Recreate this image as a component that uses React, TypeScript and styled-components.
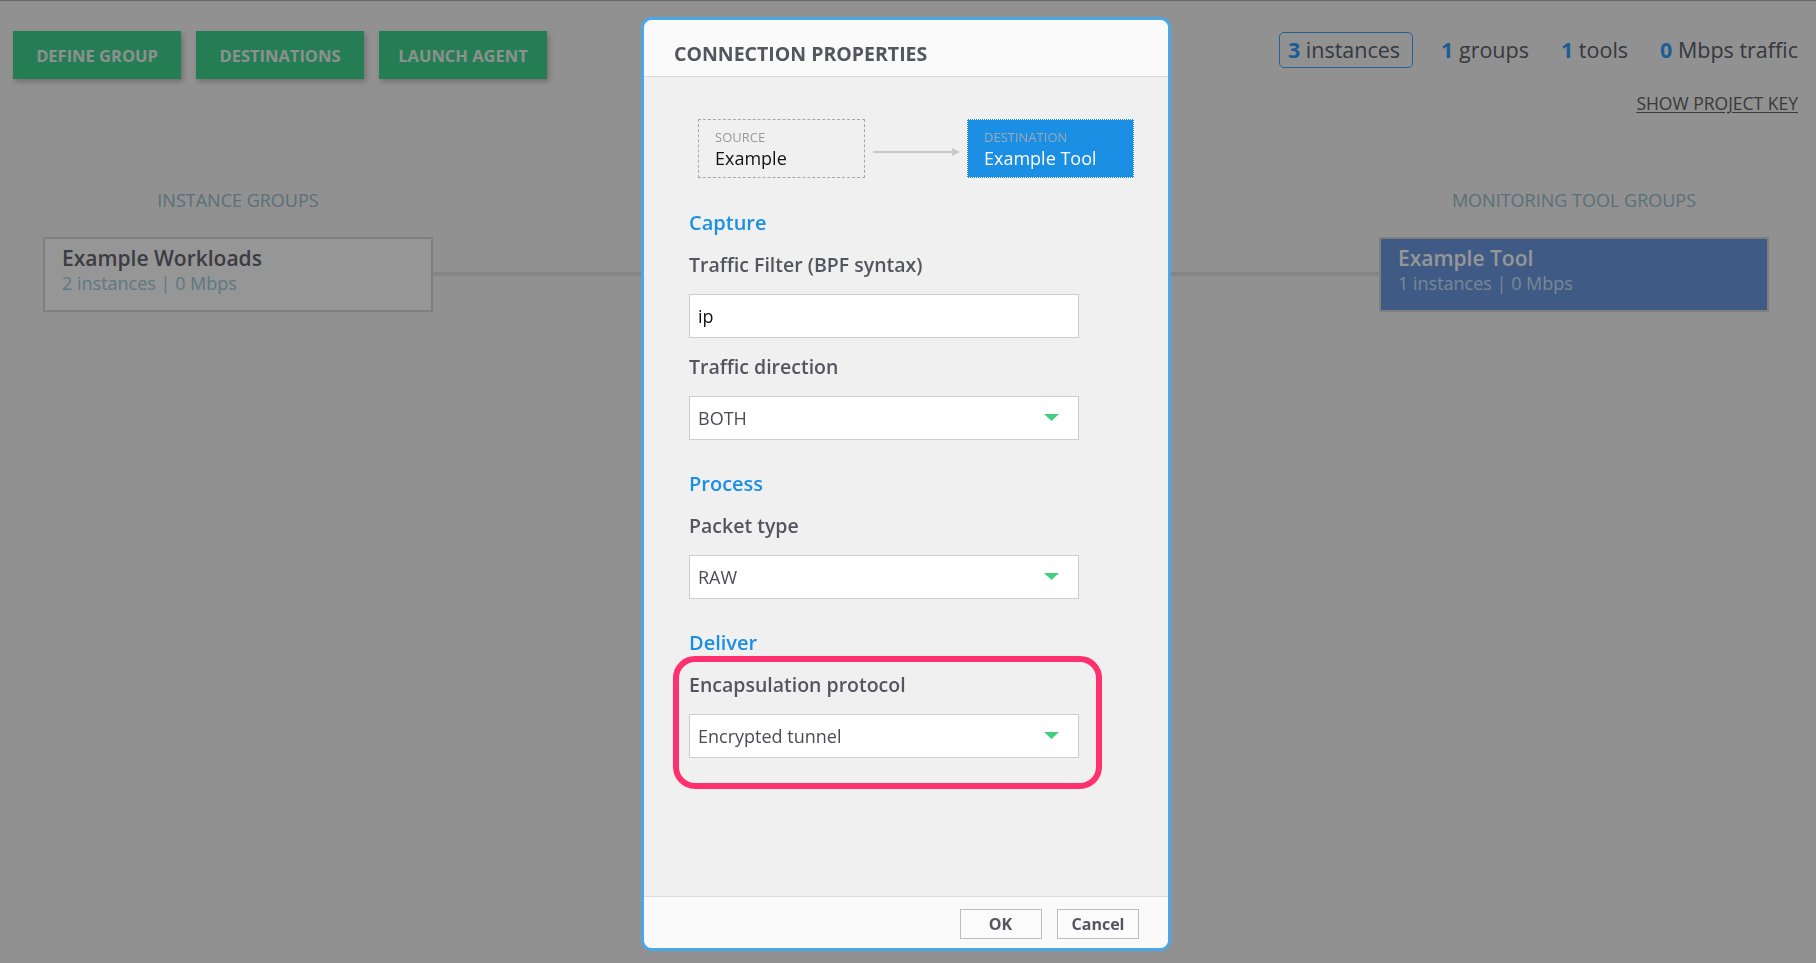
import React from "react";
import styled, { createGlobalStyle } from "styled-components";

const GlobalStyle = createGlobalStyle`
  html, body {
    margin: 0;
    padding: 0;
  }
  body {
    font-family: "Open Sans", "Noto Sans", "Liberation Sans", sans-serif;
    background: #f6f6f6;
    overflow: hidden;
  }
  * { box-sizing: border-box; }
`;

const Page = styled.div`
  min-height: 963px;
  border-top: 1px solid #b4b4b4;
  padding-top: 30px;
`;

const TopBar = styled.header`
  display: flex;
  justify-content: space-between;
  align-items: flex-start;
  padding: 0 9px 0 13px;
`;

const ActionButtons = styled.div`
  display: flex;
  gap: 15px;
`;

const ActionButton = styled.button`
  width: 168px;
  height: 48px;
  border: none;
  background: #40d68d;
  color: #eef5f1;
  font-family: inherit;
  font-weight: 700;
  font-size: 16.5px;
  text-transform: uppercase;
  box-shadow: 2px 3px 5px rgba(0, 0, 0, 0.22);
  cursor: pointer;
`;

const Summary = styled.div`
  display: flex;
  flex-direction: column;
  align-items: flex-end;
  margin-top: 1px;
`;

const Stats = styled.div`
  display: flex;
  gap: 14px;
`;

const Stat = styled.div<{ $active?: boolean }>`
  height: 36px;
  padding: ${(p) => (p.$active ? "0 12px 0 8px" : "0 8px")};
  margin-right: ${(p) => (p.$active ? "5px" : "0")};
  border: 1px solid ${(p) => (p.$active ? "#3aa5fb" : "transparent")};
  border-radius: 5px;
  font-size: 21.5px;
  line-height: 34px;
  color: #5c616b;
  white-space: nowrap;
`;

const StatValue = styled.span`
  color: #31a1fc;
  font-weight: 700;
`;

const KeyLink = styled.a`
  margin-top: 23px;
  margin-right: 9px;
  font-size: 17.5px;
  line-height: 24px;
  color: #636363;
  text-decoration: underline;
  text-underline-offset: 2px;
  text-transform: uppercase;
  cursor: pointer;
`;

const Board = styled.section`
  display: grid;
  grid-template-columns: 390px 1fr 390px;
  row-gap: 24.7px;
  margin-top: 74px;
  padding: 0 47px 0 43px;
`;

const ColumnTitle = styled.div<{ $col: number }>`
  grid-column: ${(p) => p.$col};
  text-align: center;
  font-size: 18px;
  line-height: 23px;
  color: #99bfd0;
  text-transform: uppercase;
`;

const GroupCard = styled.div<{ $tool?: boolean }>`
  height: 75px;
  padding: 6px 17px 0;
  border: 2px solid #d9d9d9;
  background: ${(p) => (p.$tool ? "#6b99e1" : "#ffffff")};
`;

const CardTitle = styled.div<{ $tool?: boolean }>`
  font-size: 21px;
  font-weight: 600;
  line-height: 27px;
  color: ${(p) => (p.$tool ? "#ffffff" : "#666673")};
`;

const CardMeta = styled.div<{ $tool?: boolean }>`
  font-size: 18px;
  line-height: 23px;
  color: ${(p) => (p.$tool ? "#cce6ff" : "#a3cae0")};
`;

const Connector = styled.div`
  height: 4px;
  align-self: center;
  background: #e3e3e3;
`;

const Overlay = styled.div`
  position: fixed;
  inset: 0;
  background: rgba(0, 0, 0, 0.41);
  display: flex;
  justify-content: center;
  align-items: flex-start;
  padding: 17px 4px 0 0;
`;

const Modal = styled.div`
  width: 530px;
  height: 934px;
  border: 3px solid #4aa8e8;
  border-radius: 11px;
  background: #f0f0f0;
  display: flex;
  flex-direction: column;
  overflow: hidden;
`;

const ModalHeader = styled.div`
  height: 57px;
  padding: 19.7px 30px 0;
  background: #fafafa;
  border-bottom: 1px solid #dcdcdc;
`;

const ModalTitle = styled.h2`
  margin: 0;
  font-size: 19.5px;
  line-height: 27px;
  font-weight: 700;
  color: #55555f;
  text-transform: uppercase;
`;

const ModalBody = styled.div`
  flex: 1;
  padding: 42px 0 0 45px;
`;

const FlowRow = styled.div`
  display: flex;
  align-items: flex-start;
  margin-left: 9px;
`;

const FlowNode = styled.div<{ $dest?: boolean }>`
  width: 167px;
  height: 59px;
  padding: 8px 16px;
  border: 1px ${(p) => (p.$dest ? "dotted #ffffff" : "dashed #a8a8a8")};
  background: ${(p) => (p.$dest ? "#1a8fe3" : "transparent")};
`;

const NodeLabel = styled.div<{ $dest?: boolean }>`
  font-size: 13px;
  line-height: 18px;
  color: ${(p) => (p.$dest ? "#9ca8b4" : "#9a9a9a")};
  text-transform: uppercase;
`;

const NodeName = styled.div<{ $dest?: boolean }>`
  font-size: 18px;
  line-height: 24px;
  color: ${(p) => (p.$dest ? "#ffffff" : "#111111")};
`;

const FlowArrow = styled.svg`
  display: block;
  margin: 28px 7px 0 8px;
`;

const Section = styled.section`
  margin-top: 30px;
  &:first-of-type {
    margin-top: 30.5px;
  }
`;

const SectionTitle = styled.h3`
  margin: 0 0 15px;
  font-size: 20px;
  line-height: 27px;
  font-weight: 600;
  color: #1a8fe3;
`;

const Field = styled.div`
  position: relative;
  width: 390px;
  & + & {
    margin-top: 15px;
  }
`;

const FieldLabel = styled.label`
  display: block;
  margin-bottom: 16px;
  font-size: 19.5px;
  line-height: 27px;
  font-weight: 600;
  color: #55555f;
`;

const TextInput = styled.input`
  display: block;
  width: 390px;
  height: 44px;
  padding: 0 8px;
  border: 1px solid #cdcdcd;
  background: #ffffff;
  font-family: inherit;
  font-size: 18px;
  color: #111111;
  outline: none;
`;

const SelectBox = styled.div`
  display: flex;
  align-items: center;
  width: 390px;
  height: 44px;
  padding: 0 19px 0 8px;
  border: 1px solid #cdcdcd;
  background: #ffffff;
  font-size: 18px;
  color: #4c4c54;
  cursor: pointer;
`;

const Caret = styled.svg`
  margin-left: auto;
  display: block;
`;

const Callout = styled.div`
  position: absolute;
  top: -14.3px;
  left: -16px;
  right: -23px;
  bottom: -31.5px;
  border: 6px solid #ff306e;
  border-radius: 22px;
  pointer-events: none;
`;

const ModalFooter = styled.div`
  display: flex;
  justify-content: flex-end;
  gap: 15.5px;
  padding: 12px 29px 9px;
  background: #fafafa;
  border-top: 1px solid #dcdcdc;
`;

const FooterButton = styled.button`
  width: 82px;
  height: 30px;
  border: 1px solid #bdbdbd;
  background: #fbfbfb;
  font-family: inherit;
  font-size: 16px;
  font-weight: 700;
  color: #55555f;
  cursor: pointer;
`;

const Select = ({ value }: { value: string }) => (
  <SelectBox>
    <span>{value}</span>
    <Caret width="15" height="7" viewBox="0 0 15 7">
      <polygon points="0,0 15,0 7.5,7" fill="#42d07f" />
    </Caret>
  </SelectBox>
);

export default function App() {
  return (
    <>
      <GlobalStyle />
      <Page>
        <TopBar>
          <ActionButtons>
            <ActionButton>Define Group</ActionButton>
            <ActionButton>Destinations</ActionButton>
            <ActionButton>Launch Agent</ActionButton>
          </ActionButtons>
          <Summary>
            <Stats>
              <Stat $active>
                <StatValue>3</StatValue> instances
              </Stat>
              <Stat>
                <StatValue>1</StatValue> groups
              </Stat>
              <Stat>
                <StatValue>1</StatValue> tools
              </Stat>
              <Stat>
                <StatValue>0</StatValue> Mbps traffic
              </Stat>
            </Stats>
            <KeyLink>Show Project Key</KeyLink>
          </Summary>
        </TopBar>
        <Board>
          <ColumnTitle $col={1}>Instance Groups</ColumnTitle>
          <ColumnTitle $col={3}>Monitoring Tool Groups</ColumnTitle>
          <GroupCard>
            <CardTitle>Example Workloads</CardTitle>
            <CardMeta>2 instances | 0 Mbps</CardMeta>
          </GroupCard>
          <Connector />
          <GroupCard $tool>
            <CardTitle $tool>Example Tool</CardTitle>
            <CardMeta $tool>1 instances | 0 Mbps</CardMeta>
          </GroupCard>
        </Board>
      </Page>
      <Overlay>
        <Modal role="dialog">
          <ModalHeader>
            <ModalTitle>Connection Properties</ModalTitle>
          </ModalHeader>
          <ModalBody>
            <FlowRow>
              <FlowNode>
                <NodeLabel>Source</NodeLabel>
                <NodeName>Example</NodeName>
              </FlowNode>
              <FlowArrow width="87" height="10" viewBox="0 0 87 10">
                <line x1="0" y1="5" x2="79" y2="5" stroke="#c9c9c9" strokeWidth="2" />
                <polygon points="79,1 87,5 79,9" fill="#c9c9c9" />
              </FlowArrow>
              <FlowNode $dest>
                <NodeLabel $dest>Destination</NodeLabel>
                <NodeName $dest>Example Tool</NodeName>
              </FlowNode>
            </FlowRow>

            <Section>
              <SectionTitle>Capture</SectionTitle>
              <Field>
                <FieldLabel>Traffic Filter (BPF syntax)</FieldLabel>
                <TextInput defaultValue="ip" />
              </Field>
              <Field>
                <FieldLabel>Traffic direction</FieldLabel>
                <Select value="BOTH" />
              </Field>
            </Section>

            <Section>
              <SectionTitle>Process</SectionTitle>
              <Field>
                <FieldLabel>Packet type</FieldLabel>
                <Select value="RAW" />
              </Field>
            </Section>

            <Section>
              <SectionTitle>Deliver</SectionTitle>
              <Field>
                <Callout />
                <FieldLabel>Encapsulation protocol</FieldLabel>
                <Select value="Encrypted tunnel" />
              </Field>
            </Section>
          </ModalBody>
          <ModalFooter>
            <FooterButton>OK</FooterButton>
            <FooterButton>Cancel</FooterButton>
          </ModalFooter>
        </Modal>
      </Overlay>
    </>
  );
}
